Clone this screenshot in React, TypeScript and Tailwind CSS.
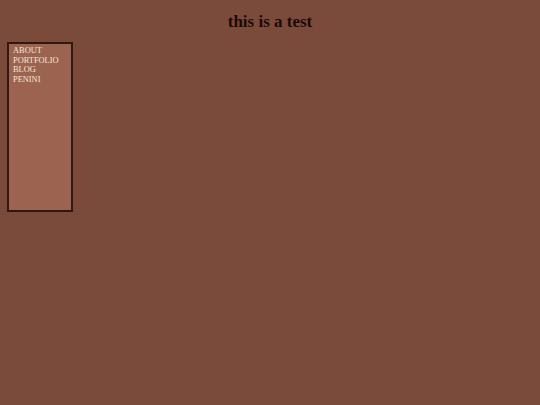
export default function App() {
  const links = ['ABOUT', 'PORTFOLIO', 'BLOG', 'PENINI']

  return (
    <div
      className="min-h-[405px] w-full bg-[#7a4a3a] pt-[12px]"
      style={{ fontFamily: '"Liberation Serif", "Times New Roman", serif' }}
    >
      <h1 className="m-0 text-center text-[17px] font-bold leading-[20px] text-[#1a0a05]">
        this is a test
      </h1>

      {/* Side menu */}
      <div className="ml-[7px] mt-[10px] h-[170px] w-[66px] border-2 border-[#321810] bg-[#9c6450] px-[4px] pt-[2px]">
        <ul className="m-0 list-none p-0">
          {links.map((l) => (
            <li key={l} className="text-[8.4px] leading-[9.7px] text-[#f3e6da]">
              {l}
            </li>
          ))}
        </ul>
      </div>
    </div>
  )
}
